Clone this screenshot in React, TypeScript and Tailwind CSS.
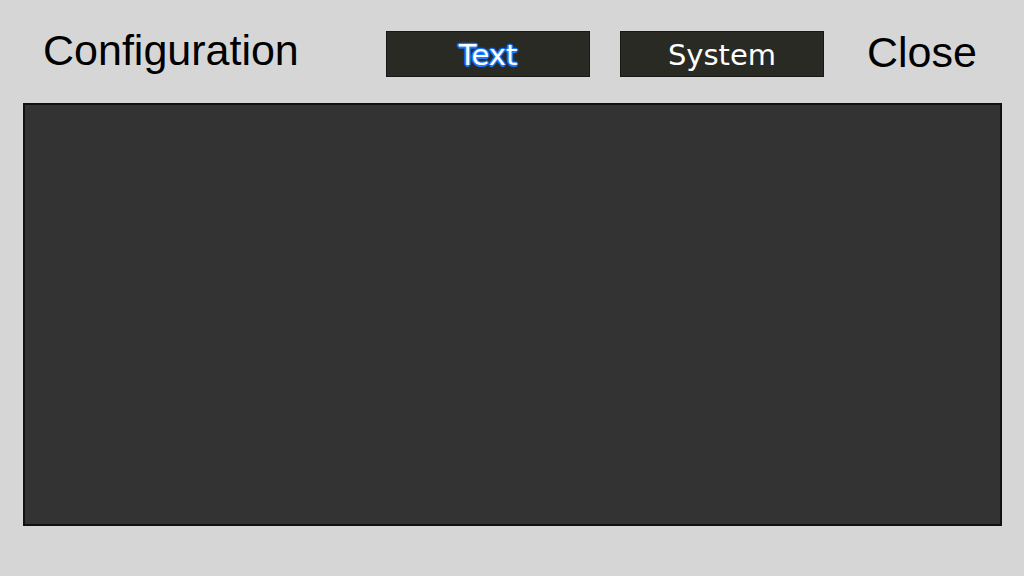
import React from 'react';

const TabButton: React.FC<{ label: string; active?: boolean }> = ({ label, active }) => {
  return (
    <button
      className={
        'w-[204px] h-[46px] bg-[#2a2a25] border border-[#181815] flex items-center justify-center pt-[3px] text-[29px] leading-none text-white ' +
        (active
          ? '[text-shadow:1.5px_0_0_#1a7cff,-1.5px_0_0_#1a7cff,0_1.5px_0_#1a7cff,0_-1.5px_0_#1a7cff,1px_1px_1px_#0a5ad8,-1px_-1px_1px_#0a5ad8,1px_-1px_1px_#0a5ad8,-1px_1px_1px_#0a5ad8,0_0_3px_#1e88ff]'
          : '')
      }
      style={{ fontFamily: '"DejaVu Sans", "Noto Sans CJK JP", sans-serif' }}
    >
      {label}
    </button>
  );
};

const App: React.FC = () => {
  return (
    <div
      className="w-full h-[576px] bg-[#d6d6d6] px-[23px] flex flex-col"
      style={{ fontFamily: '"Liberation Sans", Arial, sans-serif' }}
    >
      <div className="h-[103px] flex items-start">
        <div className="w-[363px] pl-[20px] pt-[29px] text-[43px] leading-none text-black">
          Configuration
        </div>
        <div className="pt-[31px] flex gap-[30px]">
          <TabButton label="Text" active />
          <TabButton label="System" />
        </div>
        <div className="ml-[43px] pt-[31px] text-[43px] leading-none text-black">Close</div>
      </div>
      <div className="w-[979px] h-[423px] bg-[#333333] border-2 border-[#111111]" />
    </div>
  );
};

export default App;
